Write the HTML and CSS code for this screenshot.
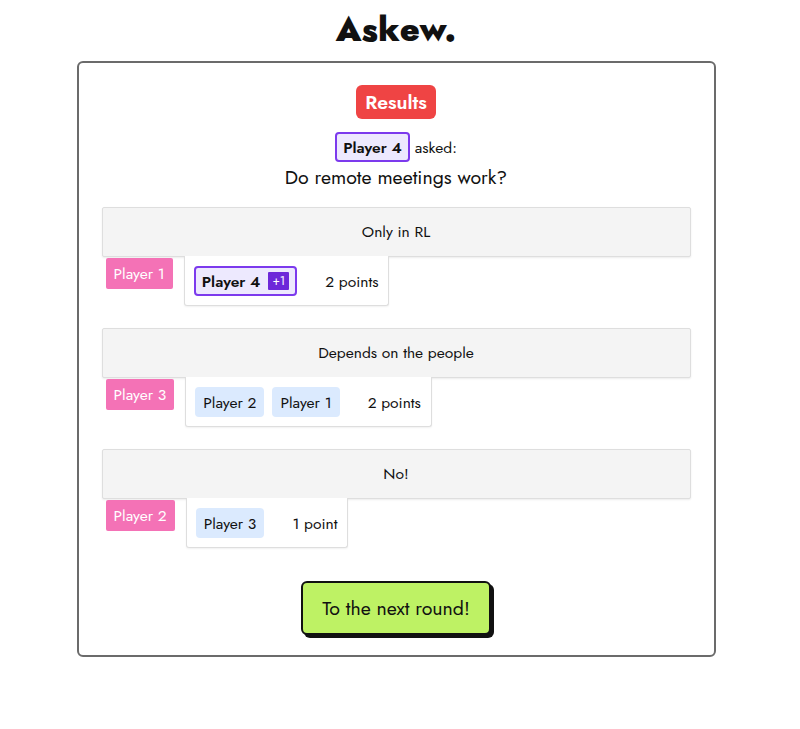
FILE: index.html
```html
<!DOCTYPE html>
<html>
<head>
<meta charset="utf-8">
<link rel="stylesheet" href="styles.css">
</head>
<body>
<h1 class="title">Askew.</h1>
<main class="card">
  <div class="results">Results</div>
  <div class="asker"><span class="chip chip-asker">Player 4</span> <span class="asked">asked:</span></div>
  <div class="question">Do remote meetings work?</div>

  <section class="group">
    <div class="answer">Only in RL</div>
    <div class="row">
      <span class="author">Player 1</span>
      <div class="guesses">
        <span class="chip chip-asker">Player 4 <span class="bonus">+1</span></span>
        <span class="points">2 points</span>
      </div>
    </div>
  </section>

  <section class="group">
    <div class="answer">Depends on the people</div>
    <div class="row">
      <span class="author">Player 3</span>
      <div class="guesses">
        <span class="chip chip-guess">Player 2</span>
        <span class="chip chip-guess">Player 1</span>
        <span class="points">2 points</span>
      </div>
    </div>
  </section>

  <section class="group">
    <div class="answer">No!</div>
    <div class="row">
      <span class="author">Player 2</span>
      <div class="guesses">
        <span class="chip chip-guess">Player 3</span>
        <span class="points">1 point</span>
      </div>
    </div>
  </section>

  <div class="actions"><button class="next">To the next round!</button></div>
</main>
</body>
</html>
```

FILE: styles.css
```css
* { box-sizing: border-box; }
body {
  margin: 0;
  padding-right: 8px;
  font-family: "Jost", "Lato", "Noto Sans", sans-serif;
  color: #111;
  background: #fff;
}
.title {
  margin: 9px 0 0;
  text-align: center;
  font-size: 33px;
  font-weight: 900;
  line-height: 41px;
  letter-spacing: 0.3px;
}
.card {
  width: 639px;
  margin: 11px auto 0;
  border: 2px solid #6b6b6b;
  border-radius: 6px;
  padding: 22px 23px 20px;
  display: flex;
  flex-direction: column;
  align-items: center;
}
.results {
  background: #ef4444;
  color: #fff;
  font-weight: 600;
  font-size: 19.5px;
  line-height: 34px;
  height: 34px;
  padding: 0 9px;
  border-radius: 6px;
}
.asker {
  margin-top: 13px;
  display: flex;
  align-items: center;
  gap: 5px;
  font-size: 15.6px;
}
.chip {
  display: inline-flex;
  align-items: center;
  height: 30px;
  padding: 0 8px;
  border-radius: 4px;
  font-size: 15.6px;
  white-space: nowrap;
}
.chip-asker {
  background: #ede9fe;
  border: 2px solid #7c3aed;
  font-weight: 600;
  padding: 0 6px;
}
.chip-guess {
  background: #dbeafe;
}
.bonus {
  display: inline-block;
  margin-left: 8px;
  background: #6d28d9;
  color: #fff;
  font-weight: 400;
  font-size: 12px;
  line-height: 18px;
  padding: 0 4px;
  border-radius: 1px;
}
.question {
  margin-top: 1px;
  font-size: 19.5px;
  line-height: 28px;
}
.group {
  align-self: stretch;
  margin-top: 16px;
}
.group + .group { margin-top: 22px; }
.answer {
  height: 50px;
  background: #f4f4f4;
  border: 1px solid #dedede;
  border-radius: 2px;
  box-shadow: 0 1px 2px rgba(0,0,0,0.08);
  display: flex;
  align-items: center;
  justify-content: center;
  font-size: 15.6px;
  padding-bottom: 1px;
}
.row {
  display: flex;
  align-items: flex-start;
}
.author {
  margin: 1px 0 0 4px;
  background: #f472b6;
  color: #fff;
  font-size: 15.6px;
  line-height: 31px;
  padding: 0 8px;
  border-radius: 2px;
}
.guesses {
  margin-left: 11px;
  margin-top: -1px;
  border: 1px solid #dedede;
  border-top: none;
  border-radius: 0 0 3px 3px;
  box-shadow: 0 1px 2px rgba(0,0,0,0.06);
  padding: 10px 10px 9px 9px;
  display: flex;
  align-items: center;
  gap: 8px;
  background: #fff;
}
.points {
  margin-left: 20px;
  font-size: 15.6px;
}
.actions {
  margin-top: 33px;
}
.next {
  font-family: inherit;
  font-size: 19.5px;
  color: #111;
  background: #bef264;
  border: 2px solid #111;
  border-radius: 6px;
  box-shadow: 3px 3px 0 #111;
  height: 54px;
  padding: 0 19px;
  cursor: pointer;
}
```
